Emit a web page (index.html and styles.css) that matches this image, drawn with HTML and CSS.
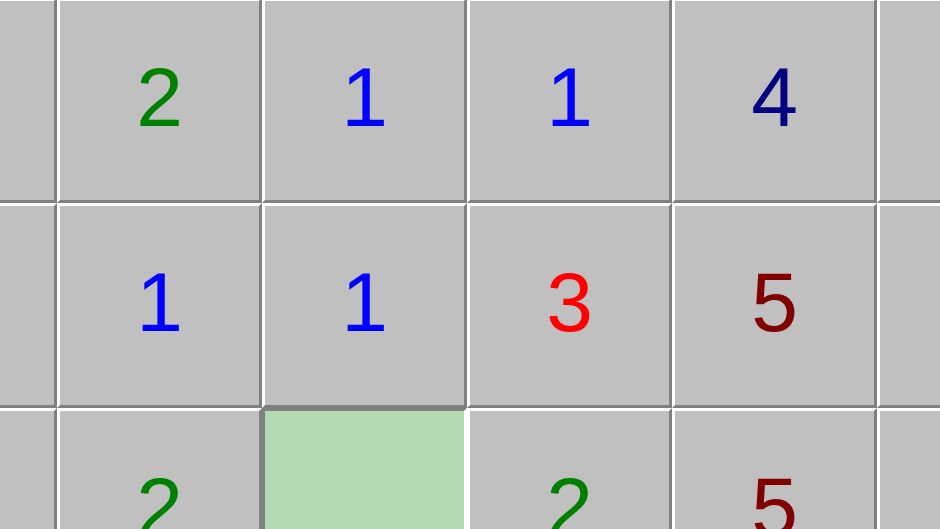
FILE: index.html
```html
<!DOCTYPE html>
<html lang="en">

<head>
    <meta charset="UTF-8">
    <title>Minesweeper</title>
    <link rel="stylesheet" href="styles.css">
</head>

<body>
    <div class="board">
        <!-- row 0 -->
        <div class="cell"></div>
        <div class="cell n2">2</div>
        <div class="cell n1">1</div>
        <div class="cell n1">1</div>
        <div class="cell n4">4</div>
        <div class="cell"></div>
        <!-- row 1 -->
        <div class="cell"></div>
        <div class="cell n1">1</div>
        <div class="cell n1">1</div>
        <div class="cell n3">3</div>
        <div class="cell n5">5</div>
        <div class="cell"></div>
        <!-- row 2 -->
        <div class="cell"></div>
        <div class="cell n2">2</div>
        <div class="cell pressed"></div>
        <div class="cell n2">2</div>
        <div class="cell n5">5</div>
        <div class="cell"></div>
    </div>
</body>

</html>
```

FILE: styles.css
```css
html,
body {
    margin: 0;
    height: 100%;
    overflow: hidden;
    background: #c0c0c0;
}

.board {
    display: grid;
    grid-template-columns: repeat(6, 205px);
    grid-auto-rows: 205px;
    margin-left: -148px;
    margin-top: -2px;
}

.cell {
    box-sizing: border-box;
    display: flex;
    align-items: center;
    justify-content: center;
    padding-bottom: 8px;
    background: #c0c0c0;
    border: 3px solid;
    border-color: #ffffff #808080 #808080 #ffffff;
    font-family: 'Liberation Sans', Arial, sans-serif;
    font-size: 84px;
    line-height: 1;
}

.pressed {
    background: #b2dbb2;
    border-color: #808080 #ffffff #ffffff #808080;
}

.n1 { color: #0000ff; }
.n2 { color: #008000; }
.n3 { color: #ff0000; }
.n4 { color: #000080; }
.n5 { color: #800000; }
```
